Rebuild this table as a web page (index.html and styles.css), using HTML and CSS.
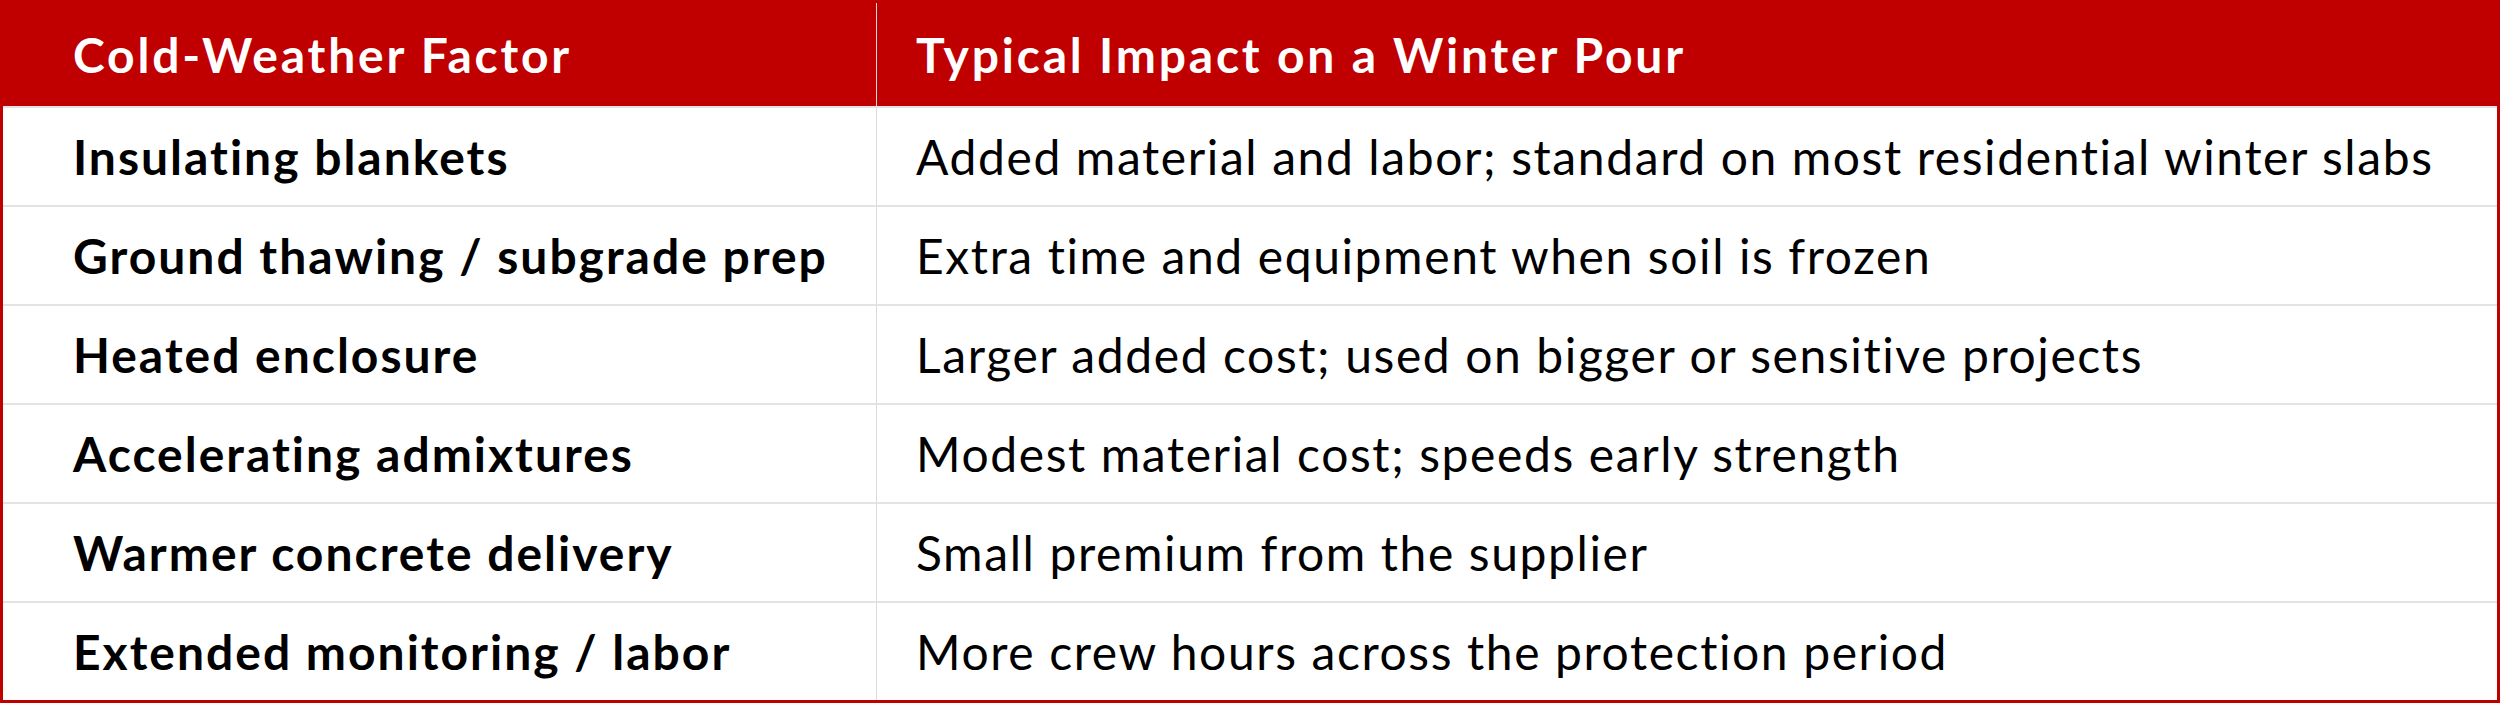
FILE: index.html
```html
<!DOCTYPE html>
<html lang="en">
<head>
<meta charset="utf-8">
<title>Cold-Weather Factors</title>
<link rel="stylesheet" href="styles.css">
</head>
<body>
<table class="cost-table">
  <thead>
    <tr>
      <th class="col-factor">Cold-Weather Factor</th>
      <th class="col-impact">Typical Impact on a Winter Pour</th>
    </tr>
  </thead>
  <tbody>
    <tr><td class="col-factor">Insulating blankets</td><td class="col-impact">Added material and labor; standard on most residential winter slabs</td></tr>
    <tr><td class="col-factor">Ground thawing / subgrade prep</td><td class="col-impact">Extra time and equipment when soil is frozen</td></tr>
    <tr><td class="col-factor">Heated enclosure</td><td class="col-impact">Larger added cost; used on bigger or sensitive projects</td></tr>
    <tr><td class="col-factor">Accelerating admixtures</td><td class="col-impact">Modest material cost; speeds early strength</td></tr>
    <tr><td class="col-factor">Warmer concrete delivery</td><td class="col-impact">Small premium from the supplier</td></tr>
    <tr><td class="col-factor">Extended monitoring / labor</td><td class="col-impact">More crew hours across the protection period</td></tr>
  </tbody>
</table>
</body>
</html>
```

FILE: styles.css
```css
html, body {
  margin: 0;
  padding: 0;
  background: #ffffff;
}

.cost-table {
  width: 2500px;
  height: 703px;
  box-sizing: border-box;
  border: 3px solid #c00000;
  border-collapse: separate;
  border-spacing: 0;
  font-family: "Lato", "Open Sans", sans-serif;
  font-size: 48px;
  color: #000000;
  table-layout: fixed;
  font-variant-ligatures: none;
  white-space: nowrap;
}

.cost-table th {
  background: #c00000;
  color: #ffffff;
  font-weight: 700;
  text-align: left;
  height: 103px;
  padding: 0;
  letter-spacing: 2.8px;
}

.cost-table td {
  height: 97px;
  padding: 0;
  border-top: 2px solid #e3e3e3;
  font-weight: 400;
  letter-spacing: 1.6px;
}

.cost-table td.col-factor {
  font-weight: 700;
  letter-spacing: 2px;
}

.col-factor {
  width: 873px;
  padding-left: 70px !important;
  box-sizing: border-box;
}

.col-impact {
  padding-left: 39px !important;
  border-left: 1px solid #dcdcdc;
}
```
